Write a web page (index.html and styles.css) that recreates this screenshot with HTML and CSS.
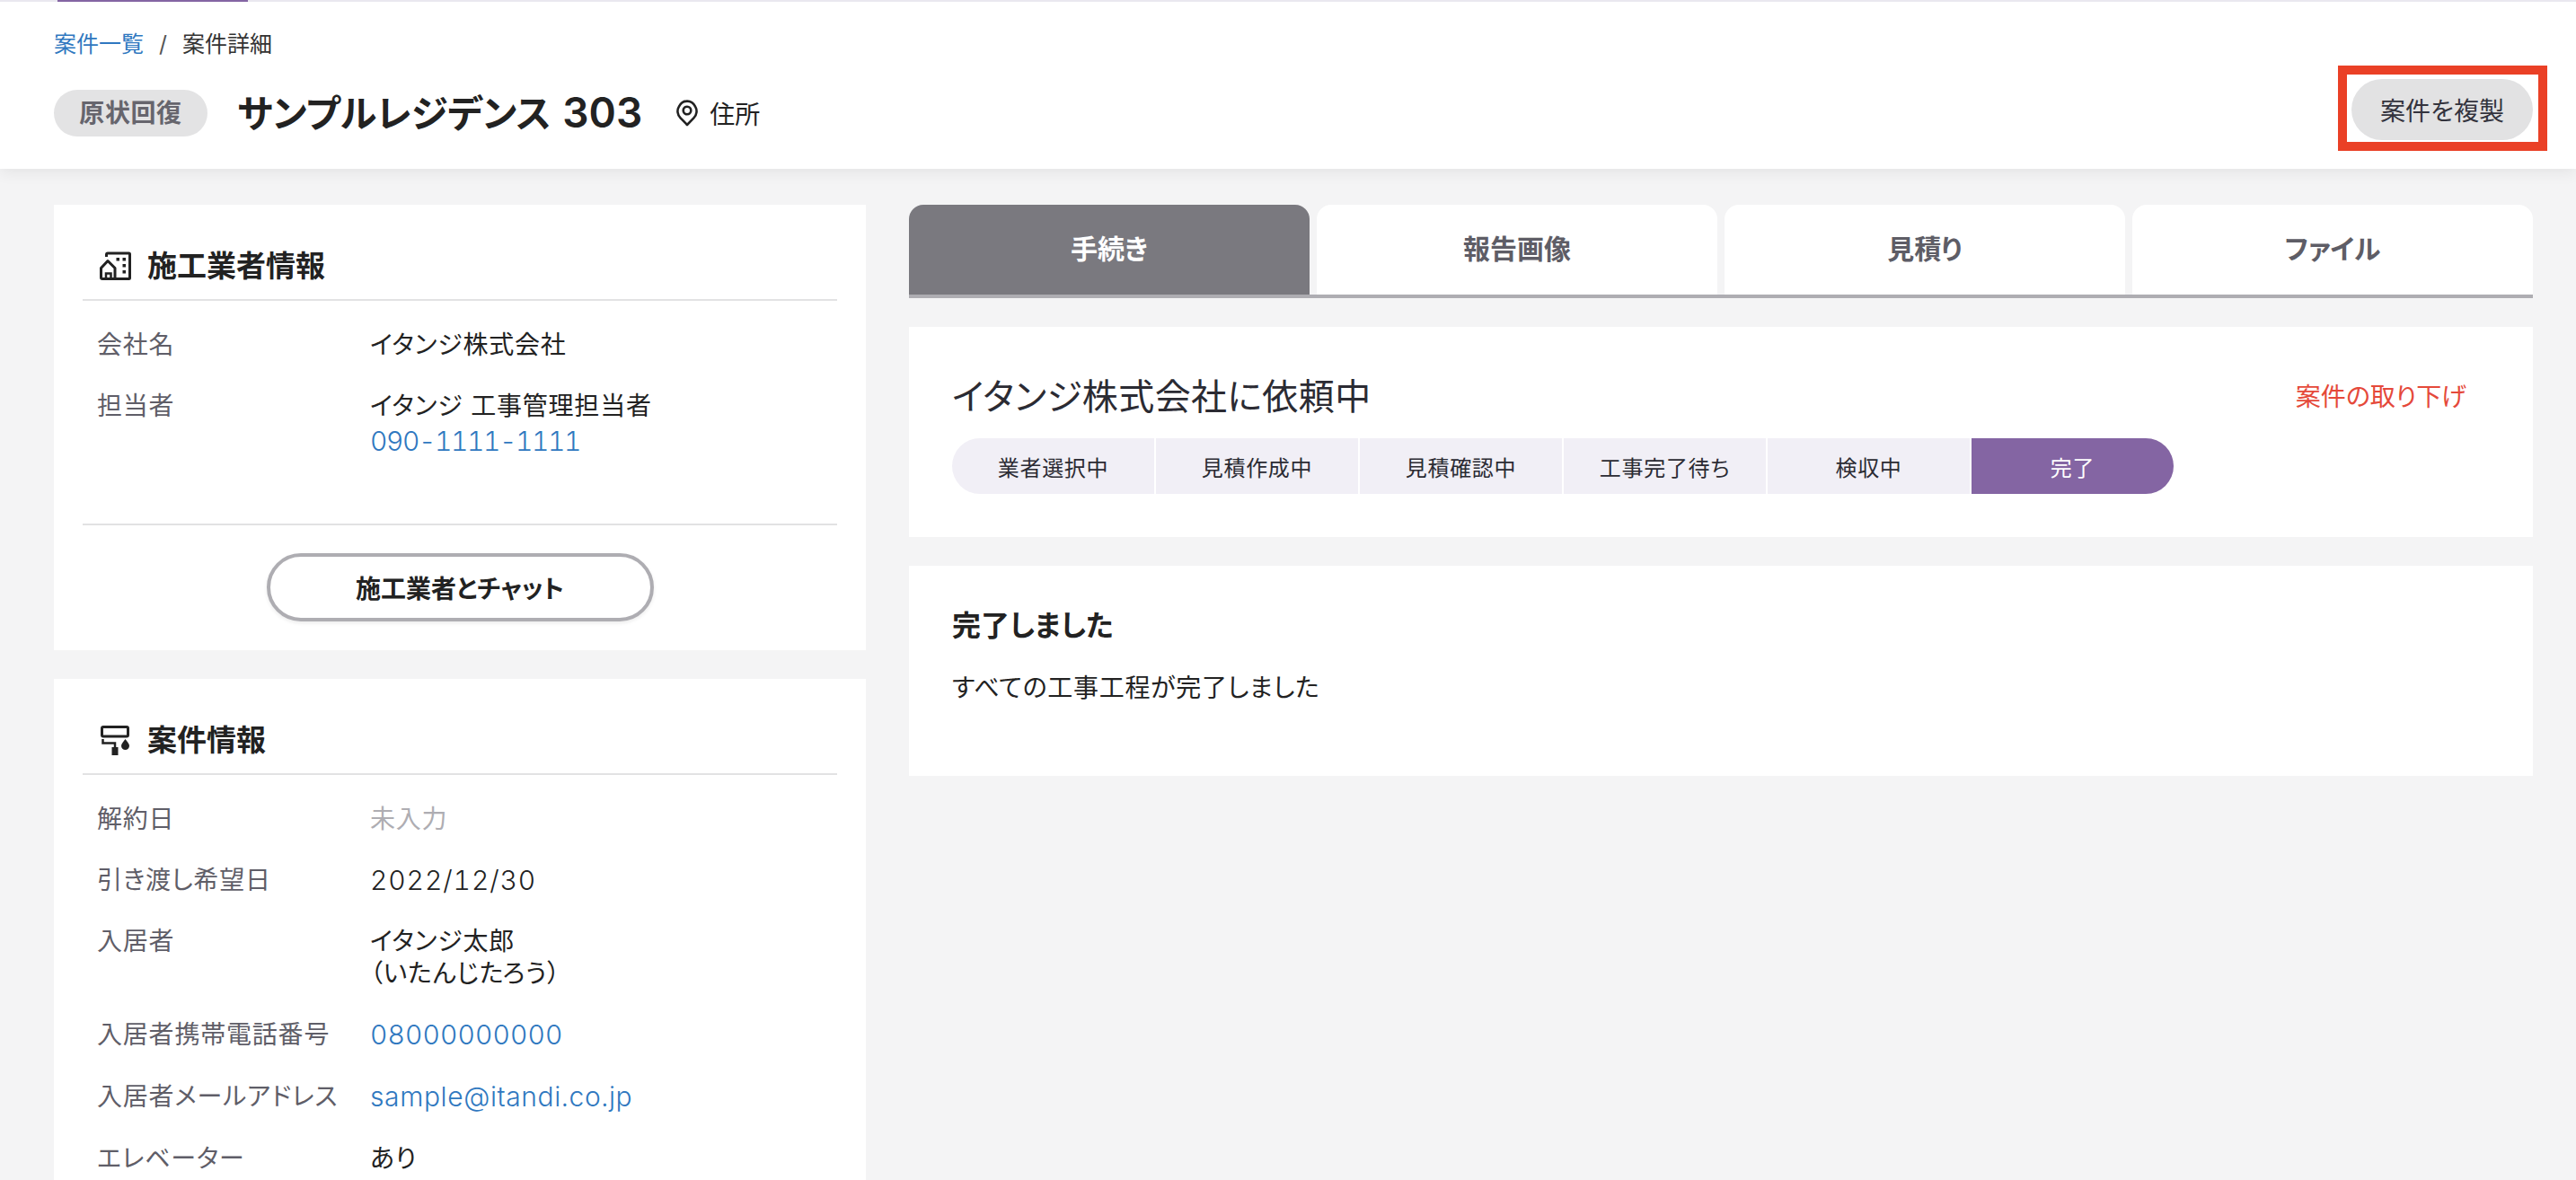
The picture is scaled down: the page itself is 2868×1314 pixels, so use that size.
FILE: index.html
```html
<!DOCTYPE html>
<html lang="ja">
<head>
<meta charset="utf-8">
<title>案件詳細</title>
<link rel="stylesheet" href="styles.css">
</head>
<body>
<header class="header">
  <div class="progress"><div class="progress-fill"></div></div>
  <div class="header-inner">
    <nav class="crumbs"><a class="link" href="#">案件一覧</a><span class="crumb-sep">/</span><span>案件詳細</span></nav>
    <div class="head-row">
      <span class="badge">原状回復</span>
      <h1 class="title">サンプルレジデンス <span class="title-num">303</span></h1>
      <span class="address">
        <svg class="pin" viewBox="0 0 24 30" width="24" height="30" fill="none" stroke="#222" stroke-width="2.6"><path d="M12 28 4.600 20.400C1 16.800.6 11.600 2.800 7.800 4.800 3.900 8.300 1.600 12 1.600s7.200 2.300 9.200 6.200c2.200 3.800 1.800 9-1.800 12.600z" stroke-linejoin="round"/><circle cx="12" cy="12" r="4.300"/></svg>
        住所
      </span>
      <div class="head-action">
        <button class="copy-btn">案件を複製</button>
        <span class="callout"></span>
      </div>
    </div>
  </div>
</header>
<main class="layout">
  <aside class="side">
    <section class="card">
      <h2 class="card-head">
        <svg class="head-icon" viewBox="0 0 36 34" width="36" height="34" fill="none" stroke="#222" stroke-width="3"><path d="M8.500 7V4.500q0-1.500 1.500-1.500h23.500q1 0 1 1v26.500q0 1-1 1H4q-1.500 0-1.500-1.500V19.500L10 11.500l8 8v12" stroke-linejoin="round"/><path d="M8 31V25.500h5.500V31" stroke-width="2.500"/><g fill="#222" stroke="none"><rect x="19.500" y="8" width="3.500" height="3.500"/><rect x="26.500" y="8" width="3.500" height="3.500"/><rect x="26.500" y="15" width="3.500" height="3.500"/><rect x="26.500" y="22" width="3.500" height="3.500"/></g></svg>
        施工業者情報
      </h2>
      <dl class="rows">
        <div class="row"><dt>会社名</dt><dd>イタンジ株式会社</dd></div>
        <div class="row"><dt>担当者</dt><dd>イタンジ 工事管理担当者<a class="link tel latin" href="#">090-1111-1111</a></dd></div>
      </dl>
      <div class="card-foot"><button class="chat-btn">施工業者とチャット</button></div>
    </section>
    <section class="card card-cut">
      <h2 class="card-head">
        <svg class="head-icon" viewBox="0 0 36 34" width="36" height="34" fill="none" stroke="#222"><rect x="3.500" y="2.500" width="29" height="10.500" rx="1.500" stroke-width="3"/><path d="M4.500 16v4.500h13.500v5" stroke-width="2.500"/><rect x="14.500" y="25" width="7" height="9" fill="#222" stroke="none"/><path d="M29.500 16c2 3 4.500 5 4.500 7.500a4.500 4.500 0 0 1-9 0c0-2.500 2.500-4.500 4.500-7.500z" fill="#222" stroke="none"/></svg>
        案件情報
      </h2>
      <dl class="rows">
        <div class="row"><dt>解約日</dt><dd class="muted">未入力</dd></div>
        <div class="row"><dt>引き渡し希望日</dt><dd class="latin date">2022/12/30</dd></div>
        <div class="row"><dt>入居者</dt><dd>イタンジ太郎<br>（いたんじたろう）</dd></div>
        <div class="row"><dt>入居者携帯電話番号</dt><dd><a class="link latin phone" href="#">08000000000</a></dd></div>
        <div class="row"><dt>入居者メールアドレス</dt><dd><a class="link latin" href="#">sample@itandi.co.jp</a></dd></div>
        <div class="row"><dt>エレベーター</dt><dd>あり</dd></div>
      </dl>
    </section>
  </aside>
  <section class="content">
    <div class="tabs">
      <a class="tab tab-active" href="#">手続き</a>
      <a class="tab" href="#">報告画像</a>
      <a class="tab" href="#">見積り</a>
      <a class="tab" href="#">ファイル</a>
    </div>
    <div class="panel panel-status">
      <div class="status-main">
        <h2 class="status-title">イタンジ株式会社に依頼中</h2>
        <ol class="steps">
          <li class="step">業者選択中</li>
          <li class="step">見積作成中</li>
          <li class="step">見積確認中</li>
          <li class="step">工事完了待ち</li>
          <li class="step">検収中</li>
          <li class="step step-current">完了</li>
        </ol>
      </div>
      <a class="withdraw" href="#">案件の取り下げ</a>
    </div>
    <div class="panel panel-note">
      <h3 class="note-title">完了しました</h3>
      <p class="note-body">すべての工事工程が完了しました</p>
    </div>
  </section>
</main>
</body>
</html>
```
FILE: styles.css
```css
* { box-sizing: border-box; }
html, body { margin: 0; height: 1314px; overflow: hidden; }
body {
  background: #f4f4f5;
  color: #222;
  font-family: Inter, "Noto Sans CJK JP", sans-serif;
  font-size: 28px;
  font-feature-settings: "palt";
}
a { text-decoration: none; }
h1, h2, h3, p, dl, dd, ol { margin: 0; padding: 0; }
ol { list-style: none; }
button { font-family: inherit; font-feature-settings: inherit; cursor: pointer; }

.header { height: 188px; background: #fff; box-shadow: 0 4px 16px rgba(0,0,0,.07); position: relative; }
.progress { height: 2px; background: #e9e8ef; }
.progress-fill { width: 212px; height: 2px; margin-left: 64px; background: #8465a3; }
.header-inner { padding: 30px 48px 0 60px; }
.crumbs { display: flex; align-items: center; height: 34px; font-size: 25px; line-height: 34px; color: #333; }
.crumb-sep { margin: 0 17px; color: #555; }
.link { color: #2f78c0; }
.head-row { display: flex; align-items: center; height: 52px; margin-top: 34px; }
.badge { width: 171px; height: 52px; line-height: 52px; text-align: center; border-radius: 26px; background: #e3e3e4; color: #66656d; font-weight: 700; letter-spacing: .6px; }
.title { margin-left: 33px; font-size: 41.5px; font-weight: 700; line-height: 52px; color: #222; }
.title-num { margin-left: 3px; font-size: 46px; font-weight: 600; }
.address { display: flex; align-items: center; gap: 13px; margin-left: 38px; color: #222; }
.pin { display: block; }
.head-action { position: relative; margin-left: auto; margin-bottom: 8px; }
.copy-btn { display: block; width: 202px; height: 68px; border: 0; border-radius: 34px; background: #e2e2e3; color: #33333d; font-size: 28px; }
.callout { position: absolute; left: -15px; top: -15px; width: 233px; height: 95px; border: 10px solid #ea4026; }

.layout { display: grid; grid-template-columns: 904px 1808px; column-gap: 48px; padding: 40px 48px 0 60px; align-items: start; }
.side { display: flex; flex-direction: column; gap: 32px; }
.card { background: #fff; padding: 0 32px; }
.card-cut { padding-bottom: 60px; }
.card-head { display: flex; align-items: center; gap: 18px; padding: 30px 0 0 18px; border-bottom: 2px solid #e2e2e3; font-size: 33px; font-weight: 700; line-height: 46px; box-sizing: content-box; height: 75px; }
.head-icon { display: block; }
.rows { display: flex; flex-direction: column; gap: 32px; padding: 31px 16px 0; }
.row { display: grid; grid-template-columns: 304px 1fr; line-height: 36px; letter-spacing: .8px; }
.row dt { color: #5f5e68; }
.row dd { color: #222; }
.row dd.muted { color: #aeadb2; }
.latin { font-size: 30px; font-weight: 300; letter-spacing: .6px; font-variant-numeric: tabular-nums; }
.row dd.date { letter-spacing: .9px; }
.phone { letter-spacing: .1px; }
.tel { display: block; line-height: 42px; letter-spacing: -1.4px; }
.card-foot { margin-top: 71px; padding: 31px 0 32px; border-top: 2px solid #e2e2e3; display: flex; justify-content: center; }
.chat-btn { width: 431px; height: 76px; border: 4px solid #aeadb2; border-radius: 38px; background: #fff; color: #222; font-size: 28px; font-weight: 700; box-shadow: 0 2px 4px rgba(0,0,0,.08); }

.tabs { display: grid; grid-template-columns: repeat(4, 1fr); column-gap: 8px; height: 104px; border-bottom: 4px solid #aeadb2; }
.tab { display: flex; align-items: center; justify-content: center; height: 100px; border-radius: 16px 16px 0 0; background: #fff; color: #5e5d66; font-size: 30px; font-weight: 700; padding-bottom: 6px; }
.tab-active { background: #7a797f; color: #fff; }
.panel { background: #fff; }
.panel-status { display: flex; justify-content: space-between; margin-top: 32px; height: 234px; padding: 56px 74px 0 48px; }
.status-main { flex: 0 0 1360px; }
.status-title { font-size: 40px; font-weight: 400; line-height: 44px; color: #2b2b33; letter-spacing: .4px; }
.steps { display: flex; margin-top: 24px; height: 62px; }
.step { flex: 1 1 0; display: flex; align-items: center; justify-content: center; background: #f1eff6; border-right: 2px solid #fff; font-size: 24px; letter-spacing: .7px; color: #2b2b33; }
.step:first-child { border-radius: 31px 0 0 31px; }
.step-current { background: #8465a3; color: #fff; border-right: 0; border-radius: 0 31px 31px 0; }
.withdraw { color: #e5493a; line-height: 44px; }
.panel-note { margin-top: 32px; height: 234px; padding: 47px 48px 0; }
.note-title { font-size: 32px; font-weight: 700; line-height: 40px; color: #222; }
.note-body { margin-top: 29px; line-height: 40px; color: #222; letter-spacing: .7px; }
```
